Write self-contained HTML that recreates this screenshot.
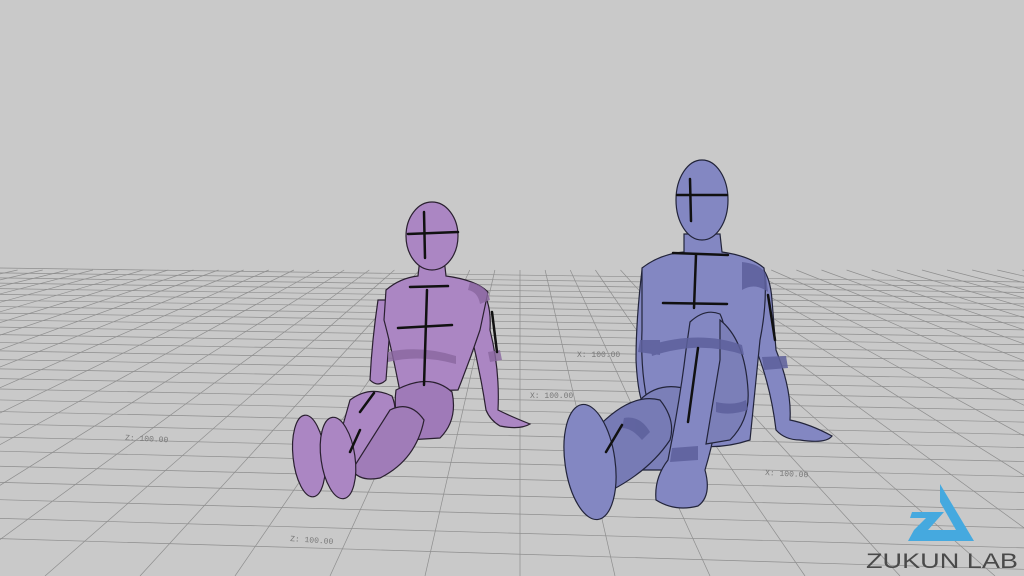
<!DOCTYPE html>
<html><head><meta charset="utf-8"><style>
html,body{margin:0;padding:0;background:#c9c9c9;overflow:hidden;width:1024px;height:576px}
svg{display:block}
</style></head><body>
<svg id="s" width="1024" height="576" viewBox="0 0 1024 576" xmlns="http://www.w3.org/2000/svg">
<rect width="1024" height="576" fill="#c9c9c9"/>
<g id="grid" stroke="#8e8e8e" stroke-width="0.7" fill="none"></g>
<g font-family="Liberation Mono, monospace" font-size="8" fill="#777">
<text x="125" y="440" transform="rotate(3 125 440)">Z: 100.00</text>
<text x="290" y="541" transform="rotate(4 290 541)">Z: 100.00</text>
<text x="765" y="475" transform="rotate(3 765 475)">X: 100.00</text>
<text x="577" y="357">X: 100.00</text>
<text x="530" y="398">X: 100.00</text>
</g>

<!-- Purple figure -->
<g stroke="#2a2030" stroke-width="1.2" fill="#ab86c3">
 <path d="M378 300 Q372 340 370 380 Q378 388 386 380 L392 300 Z"/>
 <path d="M478 285 Q492 300 490 330 Q500 370 498 410 Q510 416 530 424 Q520 430 500 426 Q490 420 486 410 Q480 370 470 330 Z"/>
 <path d="M420 258 L444 258 L446 276 Q476 280 488 292 L480 330 Q470 360 458 390 L400 392 Q392 350 384 320 L386 290 Q400 278 418 276 Z"/>
 <ellipse cx="432" cy="236" rx="26" ry="34"/>
 <path d="M396 390 Q430 372 452 392 Q458 420 440 438 L408 440 Q392 420 396 390 Z" fill="#9f7ab8"/>
 <path d="M350 400 Q370 385 392 396 Q402 420 380 450 L350 478 Q334 470 336 450 Z"/>
 <path d="M390 410 Q410 400 424 420 Q416 460 380 478 Q360 482 352 470 Z" fill="#a07cb8"/>
 <ellipse cx="309" cy="456" rx="16" ry="41" transform="rotate(-6 309 456)"/>
 <ellipse cx="338" cy="458" rx="17" ry="41" transform="rotate(-8 338 458)"/>
</g>
<g fill="#8a67a0" opacity=".8">
 <path d="M388 352 Q420 345 456 356 L456 364 Q420 354 388 362 Z"/>
 <path d="M470 282 Q488 286 490 300 L480 304 Q478 292 468 290 Z"/>
 <path d="M488 352 L500 350 L502 360 L490 362 Z"/>
</g>
<g stroke="#111" stroke-width="2.5" fill="none" stroke-linecap="round">
 <path d="M408 234 L458 232"/><path d="M424 212 L425 258"/>
 <path d="M410 287 L448 286"/><path d="M427 290 L424 385"/><path d="M398 328 L452 325"/>
 <path d="M492 312 L497 352"/><path d="M374 393 L360 412"/><path d="M360 430 L350 452"/>
</g>

<!-- Blue figure -->
<g stroke="#22243a" stroke-width="1.2" fill="#8387c2">
 <path d="M642 270 Q636 320 636 360 Q638 400 646 410 L660 410 L660 280 Z"/>
 <path d="M755 262 Q770 270 772 300 L776 350 Q792 390 790 420 Q810 424 832 436 Q826 444 800 440 Q785 440 776 430 Q770 380 752 340 Z"/>
 <path d="M684 234 L720 234 L722 252 Q750 256 764 268 Q768 300 760 340 Q754 400 750 440 Q720 450 690 445 L652 420 Q640 380 642 330 L642 268 Q660 254 684 252 Z"/>
 <ellipse cx="702" cy="200" rx="26" ry="40"/>
 <path d="M640 400 Q660 380 690 390 Q705 400 710 440 Q700 460 665 470 L625 470 Q610 450 618 420 Z" fill="#7b7fb8"/>
 <path d="M595 430 Q630 392 660 400 Q676 420 670 440 Q650 470 612 490 Z" fill="#777bb5"/>
 <ellipse cx="590" cy="462" rx="25" ry="58" transform="rotate(-8 590 462)"/>
 <path d="M690 322 Q705 308 720 314 Q728 330 724 360 Q720 420 705 470 Q712 496 698 506 Q675 512 656 500 Q654 478 668 460 Q680 400 686 350 Z"/>
 <path d="M720 320 Q745 340 748 390 Q750 420 730 440 L706 444 L720 360 Z" fill="#7b7fb8"/>
</g>
<g fill="#5d609c" opacity=".85">
 <path d="M640 340 L660 340 L660 355 L638 352 Z"/>
 <path d="M650 345 Q700 330 742 345 L744 355 Q700 340 652 356 Z"/>
 <path d="M742 262 Q762 264 766 275 L768 292 Q755 282 742 290 Z"/>
 <path d="M762 357 L786 356 L788 368 L764 370 Z"/>
 <path d="M672 448 L698 446 L698 460 L670 462 Z"/>
 <path d="M716 402 Q735 406 746 400 L748 410 Q730 416 716 412 Z"/>
 <path d="M624 418 Q640 415 650 432 L642 440 Q632 428 622 428 Z"/>
</g>
<g stroke="#111" stroke-width="2.5" fill="none" stroke-linecap="round">
 <path d="M677 195 L727 195"/><path d="M690 179 L691 221"/>
 <path d="M673 253 L728 255"/><path d="M696 255 L694 308"/><path d="M663 303 L727 304"/>
 <path d="M768 295 L775 340"/><path d="M698 348 L688 422"/><path d="M622 425 L606 452"/>
</g>

<!-- Logo -->
<g fill="#45a9df">
 <path d="M940 484 L974 541 L908 541 L914 530 L956 530 L940 502 Z"/>
 <path d="M912 512 L944 512 L928 530 L914 530 L926 518 L910 518 Z"/>
</g>
<text x="866" y="568" font-family="Liberation Sans, sans-serif" font-size="21" fill="#4a4a4a" textLength="152" lengthAdjust="spacingAndGlyphs">ZUKUN LAB</text>
</svg>
<script>
var g=document.getElementById('grid'),h='';
var a=5/(248*248),y=270;
while(y<570){var sl=(y-270)*0.03;h+='<line x1="0" y1="'+(y-2-sl)+'" x2="1024" y2="'+Math.min(575,y+12+sl)+'"/>';y+=a*(y-22)*(y-22);}
var vx=520,vy=160;
for(var k=-40;k<=40;k++){var bx=vx+k*95;var ty=270;var f=(ty-vy)/(576-vy);var tx=vx+(bx-vx)*f;h+='<line x1="'+tx+'" y1="'+ty+'" x2="'+bx+'" y2="576"/>';}
g.innerHTML=h;
</script>
</body></html>
